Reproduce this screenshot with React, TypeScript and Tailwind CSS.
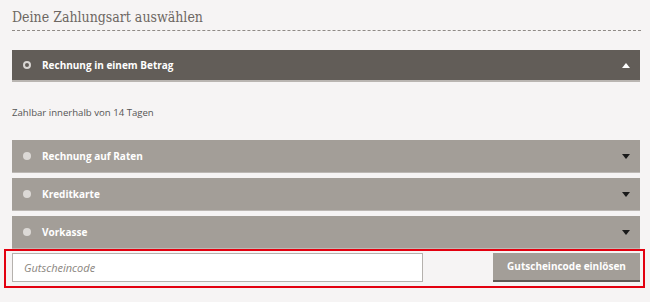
const options = [
  { label: "Rechnung auf Raten" },
  { label: "Kreditkarte" },
  { label: "Vorkasse" },
];

function Triangle({ up, className }: { up?: boolean; className: string }) {
  return (
    <svg width="8" height="5" viewBox="0 0 8 5" className={className}>
      {up ? <path d="M0 5 L4 0 L8 5 Z" fill="currentColor" /> : <path d="M0 0 L8 0 L4 5 Z" fill="currentColor" />}
    </svg>
  );
}

export default function App() {
  return (
    <div className="w-[650px] h-[302px] bg-[#f6f4f4] pl-[12px] pr-[10px] overflow-hidden font-['Open_Sans',sans-serif]">
      {/* Heading */}
      <div className="pt-[8px] pb-[4px] border-b border-dashed border-[#8f8a86] mr-[-1px]">
        <h2 className="text-[14px] leading-[18px] text-[#6d6762] font-['DejaVu_Serif',serif] font-stretch-condensed">
          Deine Zahlungsart auswählen
        </h2>
      </div>

      {/* Selected option */}
      <div className="mt-[19px] h-[32px] bg-[#625d58] border-b-2 border-[#b9b5b1] flex items-center pl-[11px] pr-[10px]">
        <span className="w-[8px] h-[8px] rounded-full border-2 border-[#d9d6d3] mr-[11px]" />
        <span className="text-white font-bold text-[10px] flex-1">Rechnung in einem Betrag</span>
        <Triangle up className="text-white" />
      </div>

      <div className="pt-[24px] pb-[20px] text-[9.6px] leading-[14px] text-[#555]">
        Zahlbar innerhalb von 14 Tagen
      </div>

      {options.map((o) => (
        <div
          key={o.label}
          className="h-[33px] mb-[5px] bg-[#a39e98] border-b border-[#bcb8b4] flex items-center pl-[11px] pr-[10px]"
        >
          <span className="w-[8px] h-[8px] rounded-full bg-[#dcd9d6] mr-[11px]" />
          <span className="text-white font-bold text-[10px] flex-1">{o.label}</span>
          <Triangle className="text-[#1a1a1a]" />
        </div>
      ))}

      {/* Voucher row */}
      <div className="-mt-[5px] -ml-[8px] -mr-[5px] border-2 border-[#e3000f] pl-[6px] pr-[3px] pt-[2px] pb-[4px] flex justify-between">
        <input
          placeholder="Gutscheincode"
          className="w-[411px] h-[29px] bg-white border border-[#b5b1ad] px-[11px] text-[11px] italic text-[#555] placeholder:text-[#8a8580] outline-none"
        />
        <button className="w-[147px] h-[29px] bg-[#a39e98] border-b-2 border-[#5e5955] text-white font-bold text-[10px]">
          Gutscheincode einlösen
        </button>
      </div>
    </div>
  );
}
